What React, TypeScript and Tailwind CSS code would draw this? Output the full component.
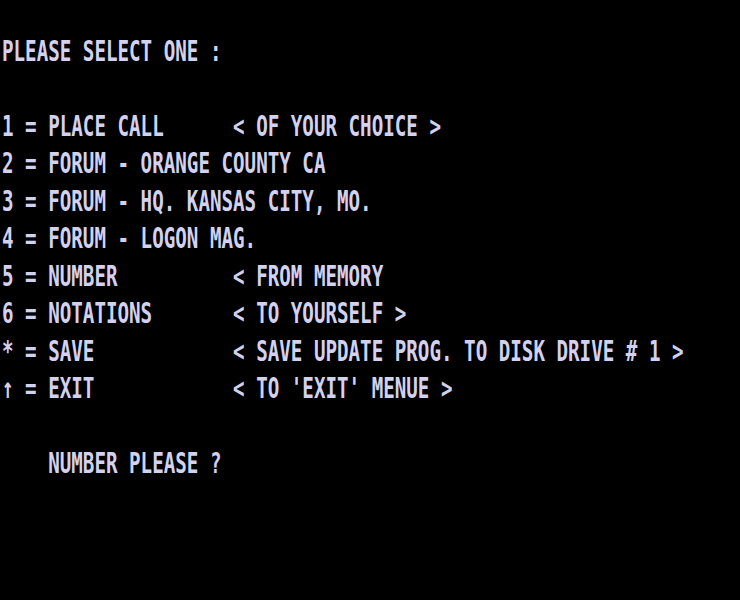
const lines: string[] = [
	"",
	"PLEASE SELECT ONE :",
	"",
	"1 = PLACE CALL      < OF YOUR CHOICE >",
	"2 = FORUM - ORANGE COUNTY CA",
	"3 = FORUM - HQ. KANSAS CITY, MO.",
	"4 = FORUM - LOGON MAG.",
	"5 = NUMBER          < FROM MEMORY",
	"6 = NOTATIONS       < TO YOURSELF >",
	"* = SAVE            < SAVE UPDATE PROG. TO DISK DRIVE # 1 >",
	"\u2191 = EXIT            < TO 'EXIT' MENUE >",
	"",
	"    NUMBER PLEASE ?",
];

export default function App() {
	return (
		<div className="h-[600px] w-[740px] overflow-hidden bg-black pl-[2px]">
			{lines.map((line, i) => (
				<div key={i} className="h-[37.5px]">
					<div
						className="origin-top scale-y-150 whitespace-pre text-[19.2px] leading-[17px] font-bold text-[#d2d2f0]"
						style={{ fontFamily: '"DejaVu Sans Mono", monospace' }}
					>
						{line}
					</div>
				</div>
			))}
		</div>
	);
}
